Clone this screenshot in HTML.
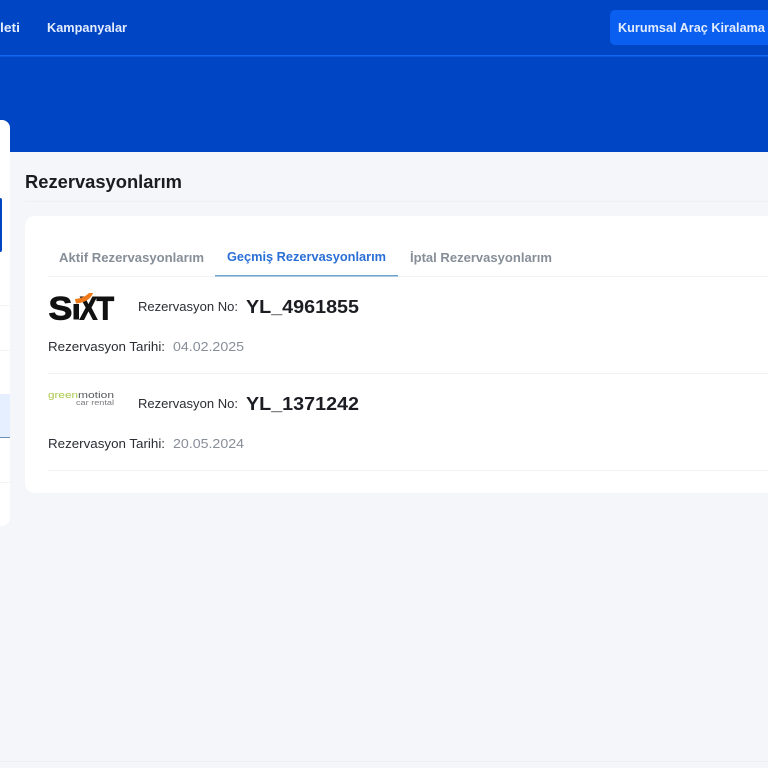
<!DOCTYPE html>
<html lang="tr">
<head>
<meta charset="utf-8">
<title>Rezervasyonlarım</title>
<style>
html,body{margin:0;padding:0;width:768px;height:768px;overflow:hidden;background:#f4f6fa}
svg{display:block;position:absolute;left:0;top:0}
text{font-family:"Liberation Sans",sans-serif}
</style>
</head>
<body>
<svg width="768" height="768" viewBox="0 0 768 768" xmlns="http://www.w3.org/2000/svg">
  <rect width="768" height="768" fill="#f4f6fa"/>
  <!-- header -->
  <rect width="768" height="152" fill="#0045c4"/>
  <rect y="55" width="768" height="1.5" fill="#1268f2"/>
  <rect x="610" y="10" width="170" height="35" rx="5" fill="#0a5ff0"/>
  <text x="0" y="32" font-size="13" font-weight="700" fill="#e3edff" textLength="20" lengthAdjust="spacingAndGlyphs">leti</text>
  <text x="47" y="32" font-size="13" font-weight="700" fill="#e3edff" textLength="80" lengthAdjust="spacingAndGlyphs">Kampanyalar</text>
  <text x="618" y="32" font-size="13" font-weight="700" fill="#e3edff" textLength="147" lengthAdjust="spacingAndGlyphs">Kurumsal Araç Kiralama</text>

  <!-- sidebar -->
  <path d="M0 120H2a8 8 0 0 1 8 8V518a8 8 0 0 1-8 8H0Z" fill="#fff"/>
  <path d="M0 198a2 2 0 0 1 2 2V250a2 2 0 0 1-2 2Z" fill="#0045c4"/>
  <rect y="305" width="10" height="1" fill="#f1f3f7"/>
  <rect y="350" width="10" height="1" fill="#f1f3f7"/>
  <rect y="394" width="10" height="44" fill="#e6efff"/>
  <rect y="437" width="10" height="1" fill="#6c8fb8"/>
  <rect y="482" width="10" height="1" fill="#f1f3f7"/>

  <!-- title -->
  <text x="25" y="188" font-size="18" font-weight="700" fill="#1b1c20" textLength="157" lengthAdjust="spacingAndGlyphs">Rezervasyonlarım</text>
  <rect x="25" y="201" width="743" height="1" fill="#eef0f4"/>

  <!-- card -->
  <rect x="25" y="216" width="770" height="277" rx="10" fill="#fff"/>

  <!-- tabs -->
  <text x="59" y="262" font-size="13" font-weight="700" fill="#868e98" textLength="145" lengthAdjust="spacingAndGlyphs">Aktif Rezervasyonlarım</text>
  <text x="227" y="261" font-size="13" font-weight="700" fill="#2a6fd6" textLength="159" lengthAdjust="spacingAndGlyphs">Geçmiş Rezervasyonlarım</text>
  <text x="410" y="262" font-size="13" font-weight="700" fill="#868e98" textLength="142" lengthAdjust="spacingAndGlyphs">İptal Rezervasyonlarım</text>
  <rect x="48" y="276" width="720" height="1" fill="#f2f3f6"/>
  <rect x="215" y="275" width="183" height="1.5" fill="#6fa3cf"/>

  <!-- row 1 -->
  <g fill="#111" stroke="#111" stroke-width=".9" font-weight="700" font-size="32">
    <text transform="translate(48.5 319.5) scale(1.12 1)">S</text>
    <text transform="translate(79.5 319.5) scale(.84 1)">X</text>
    <text transform="translate(96.5 319.5) scale(.9 1)">T</text>
  </g>
  <rect x="73.5" y="304" width="5.5" height="15.5" fill="#111"/>
  <path d="M75 299C81 298.500 86 296 89 293L93 293C91 299 84 303 76 303.500Z" fill="#ef7a1a"/>
  <text x="138" y="311" font-size="13" fill="#2b2d33" textLength="100" lengthAdjust="spacingAndGlyphs">Rezervasyon No:</text>
  <text x="246" y="313" font-size="18" font-weight="700" fill="#1c1d22" textLength="113" lengthAdjust="spacingAndGlyphs">YL_4961855</text>
  <text x="48" y="351" font-size="13" fill="#2b2d33" textLength="117" lengthAdjust="spacingAndGlyphs">Rezervasyon Tarihi:</text>
  <text x="173" y="351" font-size="13" fill="#868e98" textLength="71" lengthAdjust="spacingAndGlyphs">04.02.2025</text>
  <rect x="48" y="373" width="720" height="1" fill="#f0f1f4"/>

  <!-- row 2 -->
  <text x="48" y="398" font-size="9" fill="#a9c84a" textLength="30" lengthAdjust="spacingAndGlyphs">green</text>
  <text x="78" y="398" font-size="9" fill="#55585c" textLength="36" lengthAdjust="spacingAndGlyphs">motion</text>
  <text x="76" y="405" font-size="7" fill="#77797d" textLength="38" lengthAdjust="spacingAndGlyphs">car rental</text>
  <text x="138" y="408" font-size="13" fill="#2b2d33" textLength="100" lengthAdjust="spacingAndGlyphs">Rezervasyon No:</text>
  <text x="246" y="410" font-size="18" font-weight="700" fill="#1c1d22" textLength="113" lengthAdjust="spacingAndGlyphs">YL_1371242</text>
  <text x="48" y="448" font-size="13" fill="#2b2d33" textLength="117" lengthAdjust="spacingAndGlyphs">Rezervasyon Tarihi:</text>
  <text x="173" y="448" font-size="13" fill="#868e98" textLength="71" lengthAdjust="spacingAndGlyphs">20.05.2024</text>
  <rect x="48" y="470" width="720" height="1" fill="#f0f1f4"/>

  <!-- footer line -->
  <rect y="761" width="768" height="1" fill="#eceef2"/>
</svg>
</body>
</html>
